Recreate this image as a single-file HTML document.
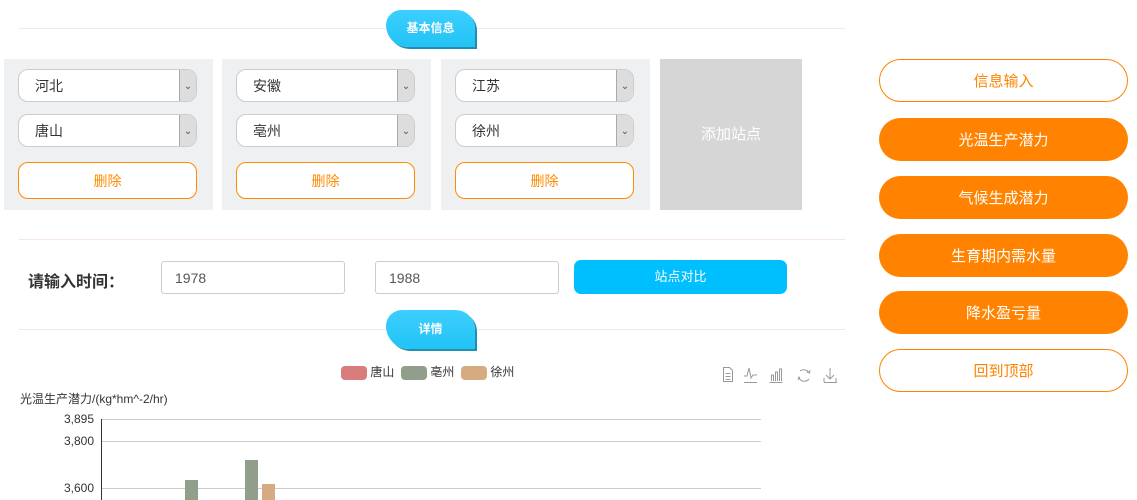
<!DOCTYPE html>
<html><head><meta charset="utf-8"><style>
*{box-sizing:border-box;margin:0;padding:0}
body{width:1137px;height:500px;overflow:hidden;background:#fff;font-family:"Liberation Sans","Noto Sans CJK SC",sans-serif;position:relative;color:#333}
.abs{position:absolute}
.line{position:absolute;left:19px;width:826px;height:1px;background:#f5e6e0}
.tab{position:absolute;left:386px;width:89px;background:linear-gradient(#3ccfff,#22c3f5);border-radius:18px 22px 0 26px;color:#fff;font-weight:bold;font-size:12px;text-align:center;box-shadow:2px 2px 0 #1f8eb0}
.card{position:absolute;top:59px;width:209px;height:151px;background:#eef0f1}
.sel{position:absolute;left:14px;width:179px;height:33px;border:1px solid #ccc;border-radius:10px;background:#fff;font-size:14px;padding-left:16px;line-height:33px}
.sel i{position:absolute;right:0;top:0;width:17px;height:31px;background:#ddd;border-left:1px solid #aaa;border-radius:0 9px 9px 0;font-style:normal;font-size:10px;text-align:center;color:#555}
.del{position:absolute;left:14px;top:103px;width:179px;height:37px;border:1px solid #ff8a00;border-radius:10px;background:#fff;color:#ff8a00;font-size:14px;text-align:center;line-height:37px}
.rb{position:absolute;left:879px;width:249px;height:43px;border-radius:22px;background:#ff8300;color:#fff;font-size:15px;text-align:center;line-height:46px}
.rb.o{background:#fff;border:1px solid #ff8300;color:#ff8300;line-height:44px}
.inp{position:absolute;top:261px;height:33px;border:1px solid #ccc;border-radius:3px;font-size:14px;padding-left:13px;line-height:33px;color:#555}
.gl{position:absolute;left:102px;width:659px;height:1px;background:#ccc}
.yl{position:absolute;left:40px;width:54px;text-align:right;font-size:12px}
</style></head><body>
<div class="line" style="top:28px"></div>
<div class="tab" style="top:10px;height:37px;line-height:37px">基本信息</div>

<div class="card" style="left:4px">
 <div class="sel" style="top:10px">河北<i>⌄</i></div>
 <div class="sel" style="top:55px">唐山<i>⌄</i></div>
 <div class="del">删除</div>
</div>
<div class="card" style="left:222px">
 <div class="sel" style="top:10px">安徽<i>⌄</i></div>
 <div class="sel" style="top:55px">亳州<i>⌄</i></div>
 <div class="del">删除</div>
</div>
<div class="card" style="left:441px">
 <div class="sel" style="top:10px">江苏<i>⌄</i></div>
 <div class="sel" style="top:55px">徐州<i>⌄</i></div>
 <div class="del">删除</div>
</div>
<div class="abs" style="left:660px;top:59px;width:142px;height:151px;background:#d6d6d6;color:#fff;font-size:15px;text-align:center;line-height:151px">添加站点</div>

<div class="line" style="top:239px"></div>
<div class="abs" style="left:28px;top:268px;font-size:16px;font-weight:bold">请输入时间：</div>
<div class="inp" style="left:161px;width:184px">1978</div>
<div class="inp" style="left:375px;width:184px">1988</div>
<div class="abs" style="left:574px;top:260px;width:213px;height:34px;background:#00bfff;border-radius:7px;color:#fff;font-size:13px;text-align:center;line-height:34px">站点对比</div>

<div class="line" style="top:329px"></div>
<div class="tab" style="top:310px;height:39px;line-height:39px">详情</div>

<div class="abs" style="left:341px;top:365px;font-size:12px;line-height:14px">
<span style="display:inline-block;width:26px;height:14px;background:#d87c7c;border-radius:4px;vertical-align:middle"></span> 唐山 &nbsp;<span style="display:inline-block;width:26px;height:14px;background:#919e8b;border-radius:4px;vertical-align:middle"></span> 亳州 &nbsp;<span style="display:inline-block;width:26px;height:14px;background:#d7ab82;border-radius:4px;vertical-align:middle"></span> 徐州</div>
<svg class="abs" style="left:720px;top:365px" width="120" height="20" fill="none" stroke="#999" stroke-width="1">
<path d="M3.5 2.5h6l3 3v11h-9z M5.5 8.5h5 M5.5 11.5h5 M5.5 14.5h5"/>
<path d="M24 11h3l2-8 2 10 2-3h4 M24 17.5h13"/>
<path d="M49.5 17.5h13 M51.5 16v-6h2v6 M55.5 16v-9h2v9 M59.5 16v-12h2v12"/>
<path d="M80 6a6 6 0 0 1 9 2 M89 14a6 6 0 0 1-10-1 M87 7l2.5 1 0.5-3 M80 13l-1-1-1 3"/>
<path d="M110 3v11 M106 10l4 4 4-4 M104 17.5h13 M104 13v4 M116 13v4"/>
</svg>
<div class="abs" style="left:20px;top:390px;font-size:12px">光温生产潜力/(kg*hm^-2/hr)</div>
<div class="abs" style="left:101px;top:419px;width:1px;height:81px;background:#333"></div>
<div class="gl" style="top:419px"></div><div class="yl" style="top:412px">3,895</div>
<div class="gl" style="top:441px"></div><div class="yl" style="top:434px">3,800</div>
<div class="gl" style="top:488px"></div><div class="yl" style="top:481px">3,600</div>
<div class="abs" style="left:185px;top:480px;width:13px;height:20px;background:#919e8b"></div>
<div class="abs" style="left:245px;top:460px;width:13px;height:40px;background:#919e8b"></div>
<div class="abs" style="left:262px;top:484px;width:13px;height:16px;background:#d7ab82"></div>

<div class="rb o" style="top:59px">信息输入</div>
<div class="rb" style="top:118px">光温生产潜力</div>
<div class="rb" style="top:176px">气候生成潜力</div>
<div class="rb" style="top:234px">生育期内需水量</div>
<div class="rb" style="top:291px">降水盈亏量</div>
<div class="rb o" style="top:349px">回到顶部</div>
</body></html>
